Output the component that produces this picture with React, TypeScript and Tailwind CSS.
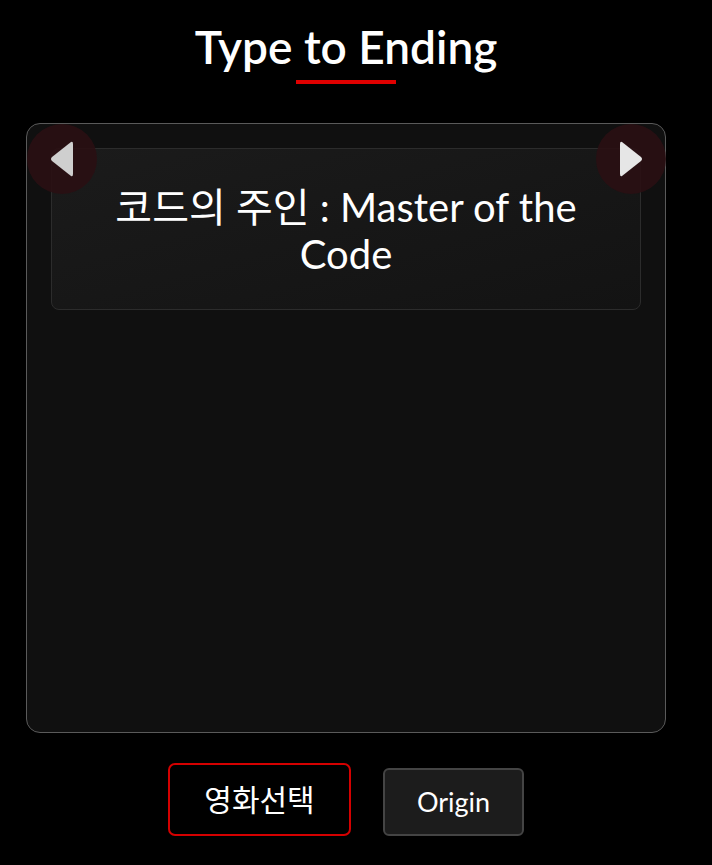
import React from "react";

const font = { fontFamily: '"Lato", "Noto Sans CJK KR", sans-serif' };

const ArrowButton = ({ dir }: { dir: "left" | "right" }) => (
    <button
        className={`absolute top-[0px] ${dir === "left" ? "left-[0px]" : "right-[-1px]"} w-[70px] h-[70px] rounded-full bg-[#2a1013]/90 flex items-center justify-center`}
    >
        {dir === "left" ? (
            <svg width="26" height="38" viewBox="0 0 26 38">
                <path d="M22 2 Q24 1 24 4 L24 34 Q24 37 22 36 L3 21 Q1 19 3 17 Z" fill="#cfcfcf" />
            </svg>
        ) : (
            <svg width="26" height="38" viewBox="0 0 26 38">
                <path d="M4 2 Q2 1 2 4 L2 34 Q2 37 4 36 L23 21 Q25 19 23 17 Z" fill="#e6e6e6" />
            </svg>
        )}
    </button>
);

export default function App() {
    return (
        <div className="w-[712px] h-[865px] bg-black text-white" style={font}>
            <div className="w-[692px] flex flex-col items-center">
                {/* Header */}
                <h1 className="mt-[18px] text-[46px] leading-[58px] font-semibold">Type to Ending</h1>
                <div className="mt-[4px] w-[100px] h-[4px] bg-[#e00000]" />

                {/* Panel */}
                <div className="relative mt-[39px] w-[640px] h-[610px] rounded-[14px] border border-[#5a5a5a] bg-[#101010] px-[24px] pt-[24px]">
                    <div className="rounded-[8px] border border-[#2c2c2c] bg-gradient-to-br from-[#1b1b1b] to-[#131313] h-[162px] flex items-center justify-center px-[52px]">
                        <p className="text-[40px] leading-[47px] text-center text-white pt-[4px]">
                            코드의 주인 : Master of the Code
                        </p>
                    </div>
                    <ArrowButton dir="left" />
                    <ArrowButton dir="right" />
                </div>

                {/* Footer buttons */}
                <div className="mt-[30px] flex items-end gap-[32px]">
                    <button className="w-[183px] h-[73px] rounded-[7px] border-2 border-[#d40000] bg-black text-[30px] text-white">
                        영화선택
                    </button>
                    <button className="w-[141px] h-[68px] rounded-[6px] border-2 border-[#444444] bg-[#1c1c1c] text-[27px] text-white">
                        Origin
                    </button>
                </div>
            </div>
        </div>
    );
}
